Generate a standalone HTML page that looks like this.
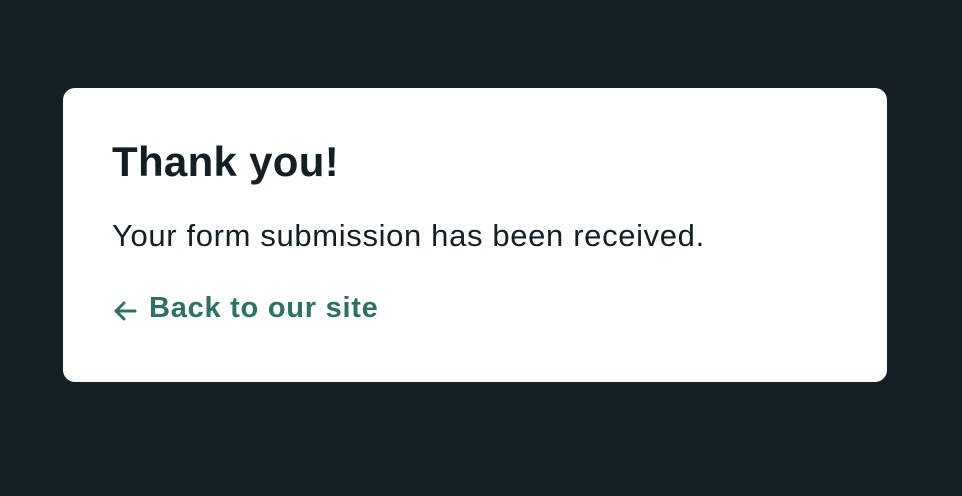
<!DOCTYPE html>
<html><head><meta charset="utf-8"><style>
html,body{margin:0;padding:0;}
body{width:962px;height:496px;background:#141f25;position:relative;overflow:hidden;font-family:"Liberation Sans",sans-serif;}
.card{position:absolute;left:63px;top:88px;width:824px;height:294px;background:#fff;border-radius:12px;}
.t{position:absolute;white-space:nowrap;line-height:1;}
h1{margin:0;left:112px;font-size:42px;font-weight:bold;color:#131f25;top:141px;letter-spacing:0.3px;}
p{margin:0;left:112px;font-size:31px;color:#131f25;top:220px;letter-spacing:0.65px;}
a{left:149px;font-size:29px;font-weight:bold;color:#2e7066;text-decoration:none;top:294px;letter-spacing:0.75px;}
svg{position:absolute;left:113px;top:300px;}
</style></head><body>
<div class="card"></div>
<h1 class="t">Thank you!</h1>
<p class="t">Your form submission has been received.</p>
<svg width="24" height="22" viewBox="0 0 24 22"><path d="M22 11H3M11 3L3 11L11 19" fill="none" stroke="#2e7066" stroke-width="3" stroke-linecap="round" stroke-linejoin="round"/></svg>
<a class="t">Back to our site</a>
</body></html>
